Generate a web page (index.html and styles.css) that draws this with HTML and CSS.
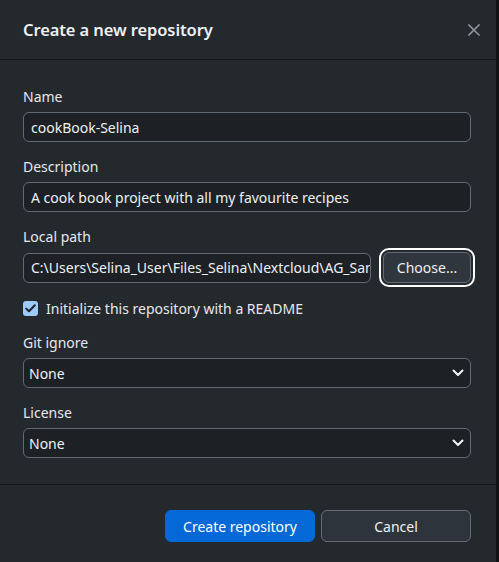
FILE: index.html
```html
<!DOCTYPE html>
<html lang="en">
<head>
<meta charset="utf-8">
<title>Create a new repository</title>
<link rel="stylesheet" href="styles.css">
</head>
<body>
<div class="dialog">
  <header class="dialog-header">
    <h1 class="dialog-title">Create a new repository</h1>
    <button class="close-button" aria-label="Close">
      <svg width="12" height="12" viewBox="0 0 12 12"><path d="M1 1 L11 11 M11 1 L1 11" stroke="currentColor" stroke-width="1.6" stroke-linecap="square" fill="none"/></svg>
    </button>
  </header>
  <div class="dialog-content">
    <div class="field">
      <label class="field-label">Name</label>
      <input class="text-input" type="text" value="cookBook-Selina">
    </div>
    <div class="field">
      <label class="field-label">Description</label>
      <input class="text-input" type="text" value="A cook book project with all my favourite recipes">
    </div>
    <div class="field">
      <label class="field-label">Local path</label>
      <div class="path-row">
        <input class="text-input path-input" type="text" value="C:\Users\Selina_User\Files_Selina\Nextcloud\AG_Sample\Projects">
        <button class="button choose-button">Choose...</button>
      </div>
    </div>
    <div class="checkbox-row">
      <span class="checkbox">
        <svg width="11" height="9" viewBox="0 0 11 9"><path d="M1.2 4.6 L4 7.3 L9.8 1.3" stroke="#1f2328" stroke-width="2" fill="none" stroke-linecap="round" stroke-linejoin="round"/></svg>
      </span>
      <span class="checkbox-label">Initialize this repository with a README</span>
    </div>
    <div class="field">
      <label class="field-label">Git ignore</label>
      <div class="select">
        <span class="select-value">None</span>
        <svg class="chevron" width="12" height="8" viewBox="0 0 12 8"><path d="M1.5 1.5 L6 6 L10.5 1.5" stroke="currentColor" stroke-width="2" fill="none" stroke-linecap="round" stroke-linejoin="round"/></svg>
      </div>
    </div>
    <div class="field">
      <label class="field-label">License</label>
      <div class="select">
        <span class="select-value">None</span>
        <svg class="chevron" width="12" height="8" viewBox="0 0 12 8"><path d="M1.5 1.5 L6 6 L10.5 1.5" stroke="currentColor" stroke-width="2" fill="none" stroke-linecap="round" stroke-linejoin="round"/></svg>
      </div>
    </div>
  </div>
  <footer class="dialog-footer">
    <button class="button primary-button">Create repository</button>
    <button class="button secondary-button">Cancel</button>
  </footer>
</div>
</body>
</html>
```

FILE: styles.css
```css
* {
  box-sizing: border-box;
}

html, body {
  margin: 0;
  padding: 0;
}

body {
  background: #101214;
  font-family: "Noto Sans", "Open Sans", "DejaVu Sans", sans-serif;
  font-size: 14px;
  color: #e6e8eb;
  width: 499px;
  height: 562px;
  overflow: hidden;
}

.dialog {
  width: 496px;
  height: 562px;
  background: #24292e;
  display: flex;
  flex-direction: column;
}

.dialog-header {
  height: 60px;
  border-bottom: 1px solid #141619;
  display: flex;
  align-items: center;
  justify-content: space-between;
  padding: 0 16px 0 23px;
}

.dialog-title {
  margin: 0;
  font-size: 16.5px;
  font-weight: 600;
  color: #eef0f2;
  letter-spacing: -0.1px;
}

.close-button {
  background: none;
  border: none;
  padding: 0;
  width: 12px;
  height: 12px;
  color: #8d939a;
  display: flex;
}

.dialog-content {
  padding: 28px 25px 26px 23px;
  display: flex;
  flex-direction: column;
  gap: 16px;
  border-bottom: 1px solid #141619;
}

.field {
  display: flex;
  flex-direction: column;
}

.field-label {
  line-height: 18px;
  margin-bottom: 6px;
  color: #e6e8eb;
}

.text-input {
  height: 30px;
  width: 100%;
  background: #1d2125;
  border: 1px solid #626b74;
  border-radius: 6px;
  padding: 0 6px 0 7px;
  font-family: inherit;
  font-size: 14px;
  color: #eef0f2;
  outline: none;
}

.path-row {
  display: flex;
  gap: 12px;
  align-items: center;
}

.path-input {
  flex: 1;
  min-width: 0;
  padding-right: 0;
}

.button {
  font-family: inherit;
  font-size: 14px;
  height: 32px;
  border-radius: 6px;
  padding: 0;
  color: #eef0f2;
}

.choose-button {
  width: 88px;
  height: 31px;
  flex: none;
  background: #2f363d;
  border: 1px solid #626b74;
  outline: 2px solid #ffffff;
  outline-offset: 2px;
}

.checkbox-row {
  display: flex;
  align-items: center;
  gap: 8px;
  height: 20px;
  margin-top: -1px;
}

.checkbox {
  width: 15px;
  height: 15px;
  border-radius: 3px;
  background: #9ccbff;
  display: flex;
  align-items: center;
  justify-content: center;
}

.select {
  height: 30px;
  background: #1d2125;
  border: 1px solid #626b74;
  border-radius: 6px;
  padding: 0 6px 0 5px;
  display: flex;
  align-items: center;
  justify-content: space-between;
  color: #eef0f2;
}

.chevron {
  color: #f2f4f6;
}

.dialog-footer {
  padding: 25px 25px 0 0;
  display: flex;
  justify-content: flex-end;
  gap: 6px;
}

.primary-button {
  width: 150px;
  background: #0468d7;
  border: 1px solid #0468d7;
  color: #ffffff;
}

.secondary-button {
  width: 150px;
  background: #2e343b;
  border: 1px solid #636c75;
}
```
